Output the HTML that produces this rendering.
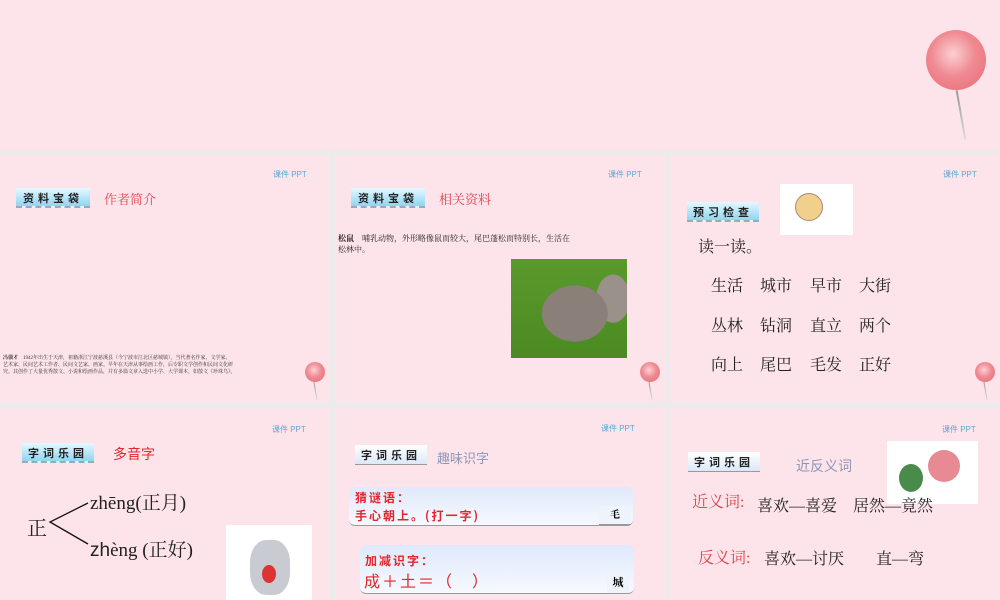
<!DOCTYPE html>
<html><head><meta charset="utf-8"><style>
*{margin:0;padding:0;box-sizing:border-box}
body{width:1000px;height:600px;background:#ebebeb;position:relative;overflow:hidden;font-family:"Liberation Serif","Noto Serif CJK SC",serif}
.s{position:absolute;background:#fde4ea}
.a{position:absolute;white-space:nowrap}
.ppt{font-family:"Liberation Sans","Noto Sans CJK SC",sans-serif;font-size:8px;color:#5aa9d6}
.tag{position:absolute;height:20px;background:linear-gradient(#e6f8ff,#8fd6f0);font-family:"Noto Sans CJK SC",sans-serif;font-size:11px;font-weight:bold;letter-spacing:4px;text-align:center;line-height:20px;color:#222;border-bottom:2px dashed #9ab}
.tag2{background:linear-gradient(#fff,#dce8f8)}
.sans{font-family:"Liberation Sans","Noto Sans CJK SC",sans-serif}
.lolli{position:absolute;border-radius:50%;background:radial-gradient(circle at 45% 40%,#fbd0d4 0,#f08a92 45%,#e76a74 100%)}
.stick{position:absolute;width:2px;background:linear-gradient(#999,#ddd);transform:rotate(-10deg)}
.box{position:absolute;background:linear-gradient(#dfe9fb,#f6f9ff);border-radius:6px;border-bottom:1px solid #999}
.red{color:#e2262d}
.w{position:absolute;font-size:16px;color:#222;white-space:nowrap}
</style></head><body>
<div class="s" style="left:0;top:0;width:1000px;height:150px"></div>
<div class="lolli" style="left:926px;top:30px;width:60px;height:60px"></div>
<div class="stick" style="left:960px;top:90px;height:50px"></div>

<!-- A -->
<div class="s" style="left:0;top:155px;width:330px;height:247px"></div>
<div class="a ppt" style="left:273px;top:169px">课件 PPT</div>
<div class="tag" style="left:16px;top:188px;width:74px">资料宝袋</div>
<div class="a red" style="left:104px;top:189px;font-size:13px;color:#e0454d">作者简介</div>
<div class="a" style="left:3px;top:355px;font-size:5px;line-height:7px;color:#333"><b>冯骥才</b>　1942年出生于天津，祖籍浙江宁波慈溪县（今宁波市江北区慈城镇），当代著名作家、文学家、<br>艺术家、民间艺术工作者、民间文艺家、画家。早年在天津从事绘画工作，后专职文学创作和民间文化研<br>究。其创作了大量优秀散文、小说和绘画作品，并有多篇文章入选中小学、大学课本，如散文《珍珠鸟》。</div>
<div class="lolli" style="left:305px;top:362px;width:20px;height:20px"></div>
<div class="stick" style="left:315px;top:382px;height:18px;width:1px"></div>

<!-- B -->
<div class="s" style="left:335px;top:155px;width:330px;height:247px"></div>
<div class="a ppt" style="left:608px;top:169px">课件 PPT</div>
<div class="tag" style="left:351px;top:188px;width:74px">资料宝袋</div>
<div class="a" style="left:439px;top:189px;font-size:13px;color:#e0454d">相关资料</div>
<div class="a" style="left:338px;top:233px;font-size:8px;line-height:11px;color:#222"><b>松鼠</b>　哺乳动物，外形略像鼠而较大，尾巴蓬松而特别长，生活在<br>松林中。</div>
<div style="position:absolute;left:511px;top:259px;width:116px;height:99px;background:radial-gradient(ellipse 40% 40% at 55% 55%,#8a8079 0,#8a8079 70%,transparent 72%),radial-gradient(ellipse 18% 30% at 88% 40%,#9a918a 0,#9a918a 80%,transparent 82%),linear-gradient(#5a9a2c,#4b8a22)"></div>
<div class="lolli" style="left:640px;top:362px;width:20px;height:20px"></div>
<div class="stick" style="left:650px;top:382px;height:18px;width:1px"></div>

<!-- C -->
<div class="s" style="left:670px;top:155px;width:330px;height:247px"></div>
<div class="a ppt" style="left:943px;top:169px">课件 PPT</div>
<div class="tag" style="left:687px;top:202px;width:72px">预习检查</div>
<div style="position:absolute;left:780px;top:184px;width:73px;height:51px;background:#fff"></div>
<div style="position:absolute;left:795px;top:193px;width:28px;height:28px;border-radius:50%;background:#f0d08a;border:1px solid #a87"></div>
<div class="a" style="left:698px;top:234px;font-size:16px;color:#222">读一读。</div>
<div class="w" style="left:711px;top:273px">生活</div><div class="w" style="left:760px;top:273px">城市</div><div class="w" style="left:810px;top:273px">早市</div><div class="w" style="left:859px;top:273px">大街</div>
<div class="w" style="left:711px;top:313px">丛林</div><div class="w" style="left:760px;top:313px">钻洞</div><div class="w" style="left:810px;top:313px">直立</div><div class="w" style="left:859px;top:313px">两个</div>
<div class="w" style="left:711px;top:352px">向上</div><div class="w" style="left:760px;top:352px">尾巴</div><div class="w" style="left:810px;top:352px">毛发</div><div class="w" style="left:859px;top:352px">正好</div>
<div class="lolli" style="left:975px;top:362px;width:20px;height:20px"></div>
<div class="stick" style="left:985px;top:382px;height:18px;width:1px"></div>

<!-- D -->
<div class="s" style="left:0;top:408px;width:330px;height:192px"></div>
<div class="a ppt" style="left:272px;top:424px">课件 PPT</div>
<div class="tag" style="left:22px;top:443px;width:72px">字词乐园</div>
<div class="a sans" style="left:113px;top:444px;font-size:14px;color:#e2262d">多音字</div>
<div class="a" style="left:27px;top:512px;font-size:20px;color:#222">正</div>
<svg style="position:absolute;left:48px;top:500px" width="42" height="48"><path d="M40 3 L2 22 L40 44" fill="none" stroke="#111" stroke-width="1.3"/></svg>
<div class="a" style="left:90px;top:488px;font-size:19px;color:#222">zhēng(正月)</div>
<div class="a" style="left:90px;top:535px;font-size:19px;color:#222"><span class="sans">zh</span>èng (正好)</div>
<div style="position:absolute;left:226px;top:525px;width:86px;height:75px;background:#fff"></div>
<div style="position:absolute;left:250px;top:540px;width:40px;height:55px;border-radius:40%;background:#c8ccd2"></div>
<div style="position:absolute;left:262px;top:565px;width:14px;height:18px;border-radius:50%;background:#d33"></div>

<!-- E -->
<div class="s" style="left:335px;top:408px;width:330px;height:192px"></div>
<div class="a ppt" style="left:601px;top:423px">课件 PPT</div>
<div class="tag tag2" style="left:355px;top:445px;width:72px;border-bottom:1px solid #999">字词乐园</div>
<div class="a sans" style="left:437px;top:448px;font-size:13px;color:#8e96b8">趣味识字</div>
<div class="box" style="left:349px;top:487px;width:284px;height:39px"></div>
<div class="a" style="left:355px;top:489px;font-size:12px;font-weight:bold;color:#e2262d;line-height:18px;letter-spacing:2px;font-family:'Noto Sans CJK SC',sans-serif">猜谜语：<br>手心朝上。(打一字)</div>
<div style="position:absolute;left:599px;top:506px;width:32px;height:19px;background:#eef3fc;border-bottom:1px solid #999;font-size:10px;text-align:center;line-height:19px;font-weight:bold">毛</div>
<div class="box" style="left:360px;top:545px;width:274px;height:49px"></div>
<div class="a" style="left:365px;top:552px;font-size:12px;font-weight:bold;color:#e2262d;letter-spacing:2px;font-family:'Noto Sans CJK SC',sans-serif">加减识字：</div>
<div class="a sans" style="left:364px;top:568px;font-size:16px;color:#e2262d;letter-spacing:2px">成＋土＝（　）</div>
<div style="position:absolute;left:607px;top:573px;width:22px;height:20px;background:#eef3fc;font-size:11px;text-align:center;line-height:20px;font-weight:bold">城</div>

<!-- F -->
<div class="s" style="left:670px;top:408px;width:330px;height:192px"></div>
<div class="a ppt" style="left:942px;top:424px">课件 PPT</div>
<div class="tag tag2" style="left:688px;top:452px;width:72px;border-bottom:1px solid #999">字词乐园</div>
<div class="a sans" style="left:796px;top:456px;font-size:14px;color:#8e96b8">近反义词</div>
<div style="position:absolute;left:887px;top:441px;width:91px;height:63px;background:#fff"></div>
<div style="position:absolute;left:928px;top:450px;width:32px;height:32px;border-radius:50%;background:#e88a94"></div>
<div style="position:absolute;left:899px;top:464px;width:24px;height:28px;border-radius:50%;background:#4a8a4a"></div>
<div class="a" style="left:692px;top:489px;font-size:16px;color:#e0454d">近义词:</div>
<div class="a" style="left:757px;top:493px;font-size:16px;color:#222">喜欢—喜爱　居然—竟然</div>
<div class="a" style="left:698px;top:545px;font-size:16px;color:#e0454d">反义词:</div>
<div class="a" style="left:764px;top:546px;font-size:16px;color:#222">喜欢—讨厌　　直—弯</div>
</body></html>
